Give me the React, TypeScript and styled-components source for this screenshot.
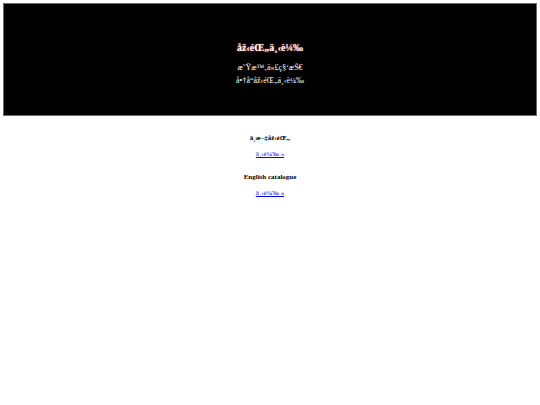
import React from "react";
import styled, { createGlobalStyle } from "styled-components";

const GlobalStyle = createGlobalStyle`
    html, body {
        margin: 0;
        padding: 0;
        background: #ffffff;
    }
    body {
        padding: 3px;
        font-family: "Liberation Serif", "Times New Roman", serif;
    }
`;

const Banner = styled.header`
    box-sizing: border-box;
    height: 113px;
    background: #000000;
    border: 1px solid #6a6a6a;
    display: flex;
    flex-direction: column;
    align-items: center;
    justify-content: center;
    padding-top: 9px;
    color: #ffffff;
    text-align: center;
`;

const Title = styled.h1`
    margin: 0 0 8px;
    font-size: 10px;
    font-weight: bold;
    color: #fff4f0;
    text-shadow: 0 0 2px #c06060, 0 0 1px #a04040;
`;

const SubLine = styled.p`
    margin: 0;
    font-size: 8px;
    line-height: 13px;
`;

const Content = styled.main`
    display: flex;
    flex-direction: column;
    align-items: center;
    padding-top: 18px;
    text-align: center;
`;

const Section = styled.section`
    display: flex;
    flex-direction: column;
    align-items: center;
    margin-bottom: 15px;
`;

const SectionTitle = styled.h2`
    margin: 0 0 8px;
    font-size: 7px;
    font-weight: bold;
    color: #000000;
`;

const DownloadLink = styled.a`
    font-size: 7px;
    color: #0000ee;
    text-decoration: underline;
`;

const sections = [
    { title: "ä¸\u00ADæ–‡åž‹éŒ„", link: "ä¸‹è¼‰ »" },
    { title: "English catalogue", link: "ä¸‹è¼‰ »" },
];

export default function App() {
    return (
        <>
            <GlobalStyle />
            <Banner>
                <Title>åž‹éŒ„ä¸‹è¼‰</Title>
                <SubLine>æ˜Ÿæ™‚ä»£ç§‘æŠ€</SubLine>
                <SubLine>å•†å“åž‹éŒ„ä¸‹è¼‰</SubLine>
            </Banner>
            <Content>
                {sections.map((s) => (
                    <Section key={s.title}>
                        <SectionTitle>{s.title}</SectionTitle>
                        <DownloadLink href="#">{s.link}</DownloadLink>
                    </Section>
                ))}
            </Content>
        </>
    );
}
